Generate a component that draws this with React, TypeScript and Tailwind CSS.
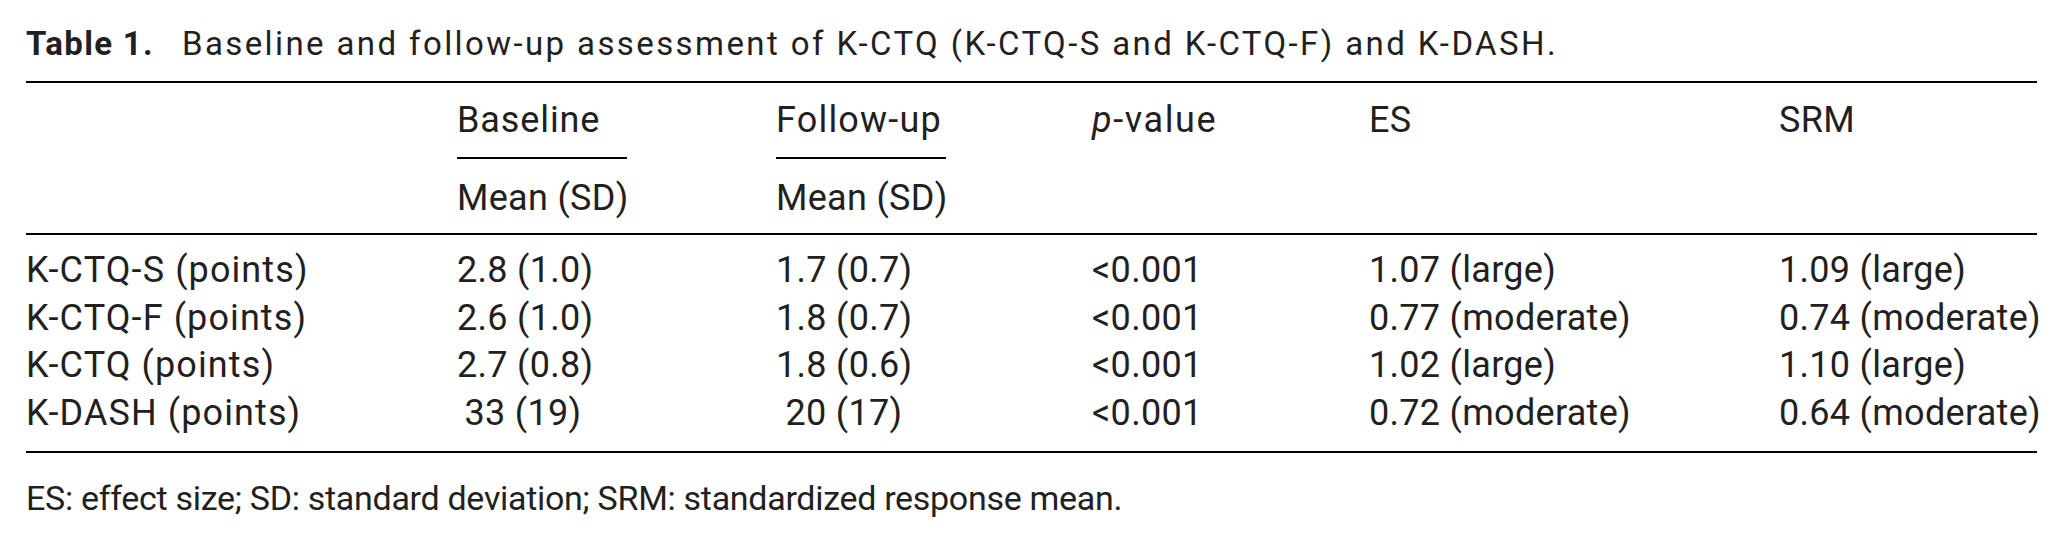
import React from 'react';

const rows = [
  ['K-CTQ-S (points)', '2.8 (1.0)', '1.7 (0.7)', '<0.001', '1.07 (large)', '1.09 (large)'],
  ['K-CTQ-F (points)', '2.6 (1.0)', '1.8 (0.7)', '<0.001', '0.77 (moderate)', '0.74 (moderate)'],
  ['K-CTQ (points)', '2.7 (0.8)', '1.8 (0.6)', '<0.001', '1.02 (large)', '1.10 (large)'],
  ['K-DASH (points)', '33 (19)', '20 (17)', '<0.001', '0.72 (moderate)', '0.64 (moderate)'],
];

const cols = 'grid grid-cols-[431px_319px_316px_277px_410px_1fr]';

export default function App() {
  return (
    <div className="w-[2064px] h-[543px] bg-white text-[#231f20] pl-[26px] pr-[27px] pt-[24px] font-['Roboto',sans-serif]">
      <div className="text-[33px] leading-[40px] whitespace-nowrap">
        <span className="font-bold tracking-[1.3px]">Table 1.</span>
        <span className="ml-[28px] tracking-[2.4px]">
          Baseline and follow-up assessment of K-CTQ (K-CTQ-S and K-CTQ-F) and K-DASH.
        </span>
      </div>

      <div className="mt-[17px] border-t-2 border-black text-[36px] tracking-[0.3px]">
        {/* header */}
        <div className={`${cols} border-b-2 border-black pt-[17px] pb-[15px]`}>
          <div />
          <div className="flex flex-col items-start">
            <div className="leading-[40px] tracking-[0.9px]">Baseline</div>
            <div className="mt-[17px] h-[2px] w-[170px] bg-black" />
            <div className="mt-[19px] leading-[40px]">Mean (SD)</div>
          </div>
          <div className="flex flex-col items-start">
            <div className="leading-[40px] tracking-[1.2px]">Follow-up</div>
            <div className="mt-[17px] h-[2px] w-[170px] bg-black" />
            <div className="mt-[19px] leading-[40px]">Mean (SD)</div>
          </div>
          <div className="leading-[40px] tracking-[1.6px]">
            <span className="italic">p</span>-value
          </div>
          <div className="leading-[40px]">ES</div>
          <div className="leading-[40px]">SRM</div>
        </div>

        {/* body */}
        <div className="border-b-2 border-black pt-[12px] pb-[13px]">
          {rows.map((r) => (
            <div key={r[0]} className={`${cols} leading-[47.7px] whitespace-nowrap`}>
              <div className="tracking-[1.1px]">{r[0]}</div>
              <div>
                <div className="w-[132px] text-center">{r[1]}</div>
              </div>
              <div>
                <div className="w-[136px] text-center">{r[2]}</div>
              </div>
              <div>{r[3]}</div>
              <div>{r[4]}</div>
              <div>{r[5]}</div>
            </div>
          ))}
        </div>
      </div>

      <div className="mt-[25px] text-[34px] leading-[40px] tracking-[-0.3px] whitespace-nowrap">
        ES: effect size; SD: standard deviation; SRM: standardized response mean.
      </div>
    </div>
  );
}
